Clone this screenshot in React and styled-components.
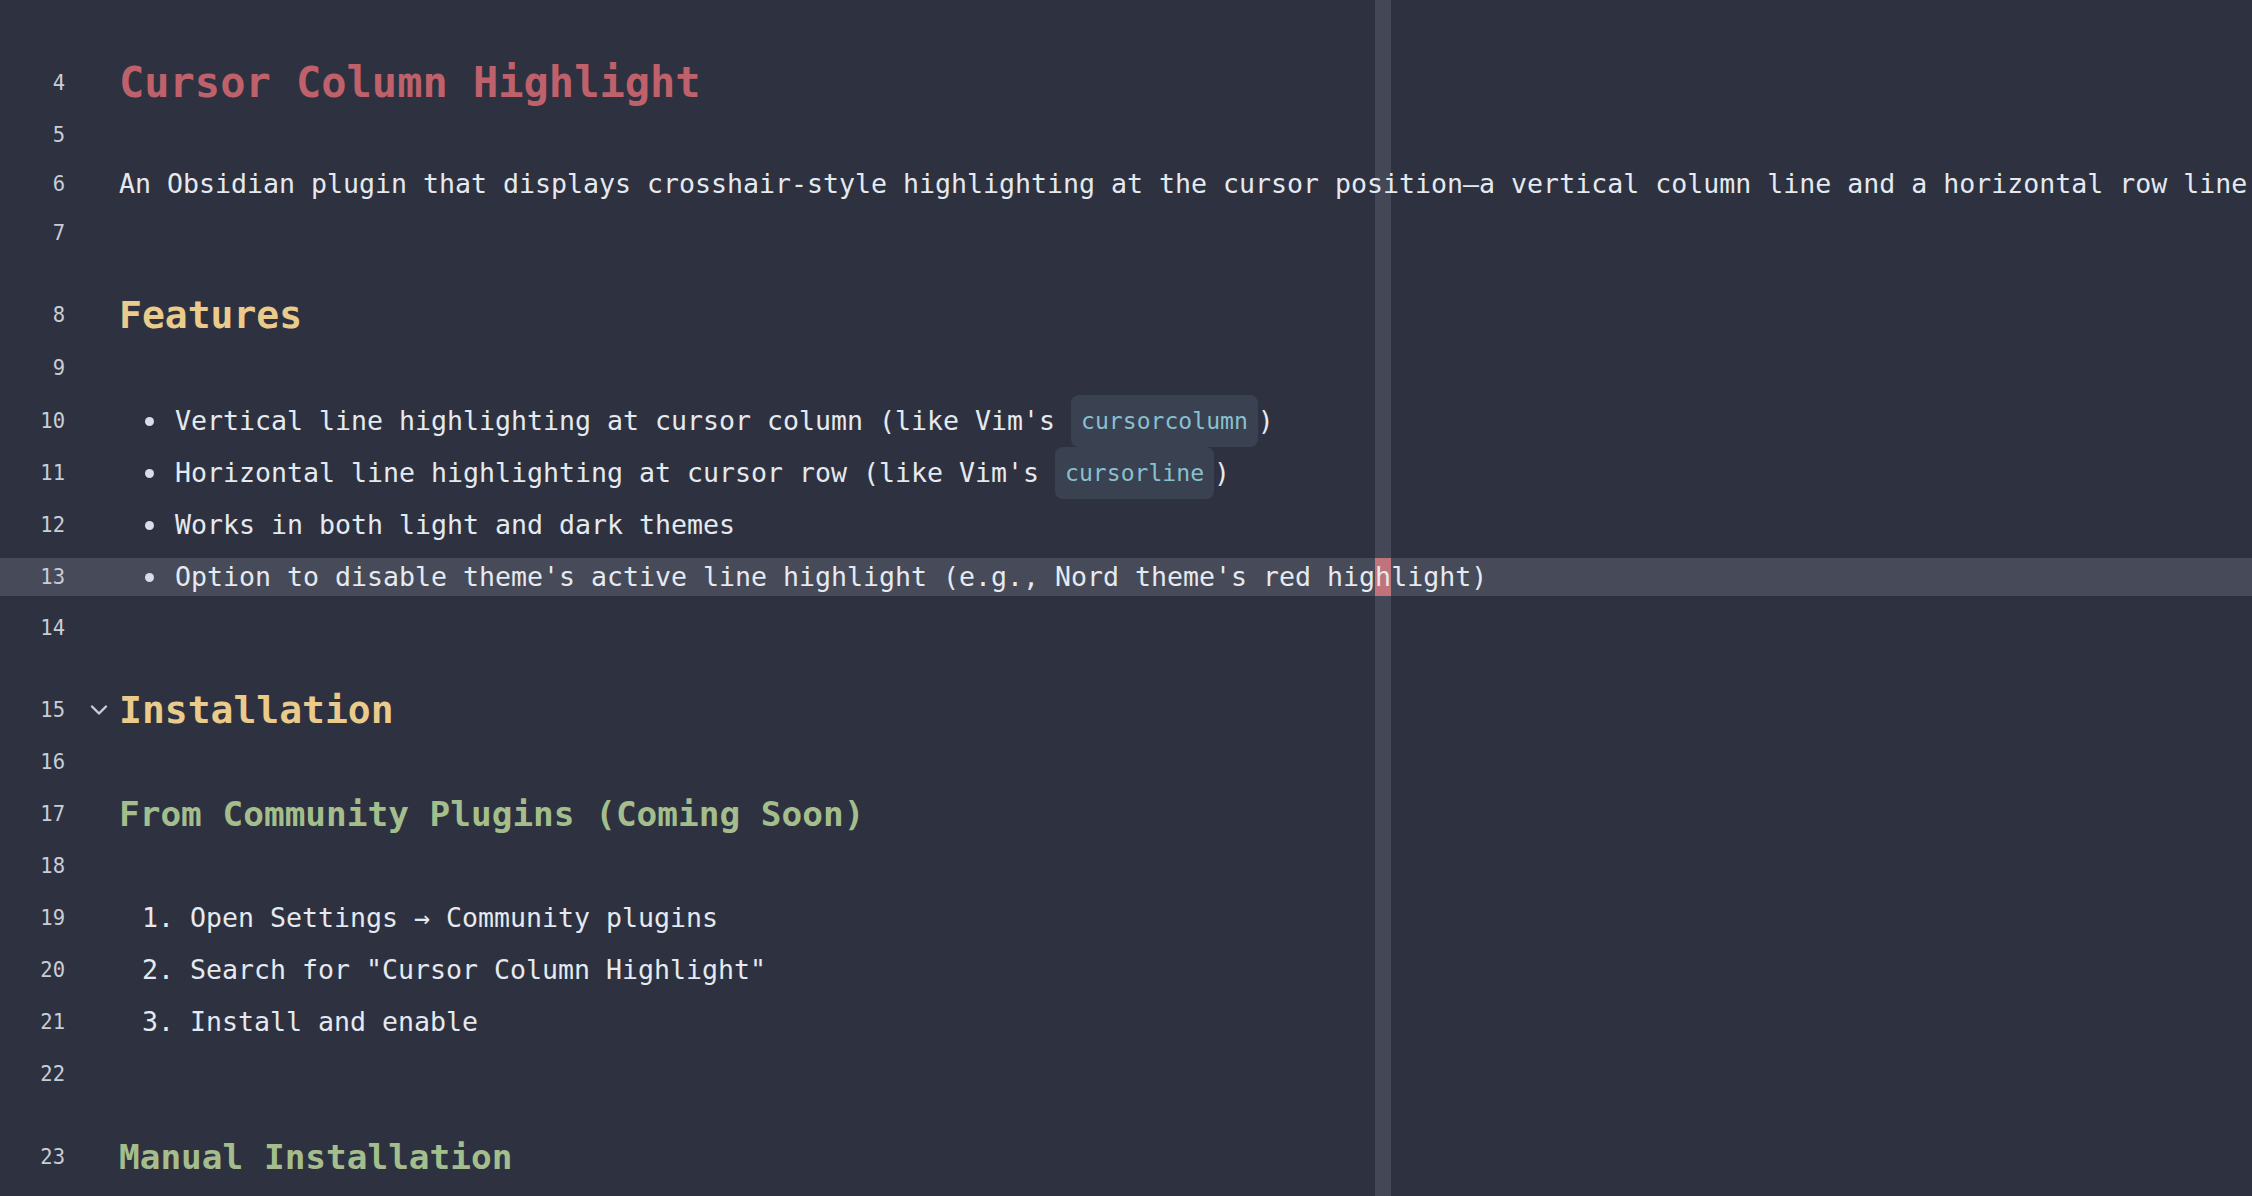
import React from 'react'
import styled, { createGlobalStyle } from 'styled-components'

const GlobalStyle = createGlobalStyle`
  html, body {
    margin: 0;
    padding: 0;
    background: #2e3240;
    overflow: hidden;
  }
`

const Editor = styled.div`
  position: relative;
  min-height: 100vh;
  padding-top: 56px;
  box-sizing: border-box;
  background: #2e3240;
  font-family: 'DejaVu Sans Mono', 'Liberation Mono', monospace;
  color: #e5e9f0;
  overflow: hidden;
`

// the crosshair column that follows the cursor
const ColumnStrip = styled.div`
  position: absolute;
  top: 0;
  bottom: 0;
  left: 1375px;
  width: 16px;
  background: #444756;
  z-index: 0;
`

const Row = styled.div`
  position: relative;
  z-index: 1;
  display: flex;
  align-items: center;
  height: ${(p) => p.$h || 52}px;
  padding-top: ${(p) => p.$pad || 0}px;
`

const Band = styled.div`
  flex: 1;
  display: flex;
  align-items: center;
  height: 38px;
  background: ${(p) => (p.$active ? '#474b59' : 'transparent')};
`

const LineNo = styled.div`
  width: 65px;
  flex-shrink: 0;
  text-align: right;
  font-size: 20.5px;
  line-height: 38px;
  color: #c8cdd6;
`

const Fold = styled.div`
  width: 54px;
  flex-shrink: 0;
  box-sizing: border-box;
  padding-right: 11px;
  display: flex;
  justify-content: flex-end;
  align-items: center;
  color: #c8cdd6;
`

const Text = styled.div`
  display: flex;
  align-items: center;
  white-space: pre;
  font-size: 26.58px;
  line-height: 38px;
  color: #e5e9f0;
`

const Heading = styled.div`
  white-space: pre;
  font-weight: bold;
  font-size: ${(p) => p.$size}px;
  line-height: 52px;
  color: ${(p) => p.$color};
`

const Bullet = styled.span`
  display: flex;
  align-items: center;
  width: 56px;
  flex-shrink: 0;
  padding-left: 26px;
  box-sizing: border-box;
  &::before {
    content: '';
    width: 9px;
    height: 9px;
    border-radius: 50%;
    background: #d8dee9;
  }
`

const Num = styled.span`
  padding-left: 23px;
`

const Code = styled.code`
  display: inline-block;
  font-family: inherit;
  font-size: 23.09px;
  line-height: 38px;
  padding: 7px 10px;
  background: #3a4151;
  color: #88c0d0;
  border-radius: 8px;
`

const Cursor = styled.span`
  display: inline-block;
  line-height: 38px;
  background: #c0737a;
`

const Chevron = () => (
  <svg width="18" height="12" viewBox="0 0 18 12" fill="none">
    <polyline
      points="2,2.5 9,9.5 16,2.5"
      stroke="currentColor"
      strokeWidth="2.4"
      strokeLinecap="round"
      strokeLinejoin="round"
    />
  </svg>
)

const Line = ({ n, h, pad, active, fold, children }) => (
  <Row $h={h} $pad={pad}>
    <Band $active={active}>
      <LineNo>{n}</LineNo>
      <Fold>{fold && <Chevron />}</Fold>
      {children}
    </Band>
  </Row>
)

const H1 = ({ children }) => (
  <Heading $size={42} $color="#bf616a">{children}</Heading>
)
const H2 = ({ children }) => (
  <Heading $size={38} $color="#ebcb8b">{children}</Heading>
)
const H3 = ({ children }) => (
  <Heading $size={34.4} $color="#a3be8c">{children}</Heading>
)

const Item = ({ children }) => (
  <Text>
    <Bullet />
    {children}
  </Text>
)

const Step = ({ i, children }) => (
  <Text>
    <Num>{i}. </Num>
    {children}
  </Text>
)

export default function App() {
  return (
    <>
      <GlobalStyle />
      <Editor>
        <ColumnStrip />
        <Line n={4} h={54}>
          <H1>Cursor Column Highlight</H1>
        </Line>
        <Line n={5} h={50} />
        <Line n={6} h={48}>
          <Text>
            An Obsidian plugin that displays crosshair-style highlighting at the cursor position—a vertical column line and a horizontal row line
          </Text>
        </Line>
        <Line n={7} h={50} />
        <Line n={8} pad={31}>
          <H2>Features</H2>
        </Line>
        <Line n={9} h={54} />
        <Line n={10}>
          <Item>
            Vertical line highlighting at cursor column (like Vim's <Code>cursorcolumn</Code>)
          </Item>
        </Line>
        <Line n={11}>
          <Item>
            Horizontal line highlighting at cursor row (like Vim's <Code>cursorline</Code>)
          </Item>
        </Line>
        <Line n={12}>
          <Item>Works in both light and dark themes</Item>
        </Line>
        <Line n={13} active>
          <Item>
            Option to disable theme's active line highlight (e.g., Nord theme's red hig
            <Cursor>h</Cursor>
            light)
          </Item>
        </Line>
        <Line n={14} h={50} />
        <Line n={15} pad={31} fold>
          <H2>Installation</H2>
        </Line>
        <Line n={16} />
        <Line n={17}>
          <H3>From Community Plugins (Coming Soon)</H3>
        </Line>
        <Line n={18} />
        <Line n={19}>
          <Step i={1}>Open Settings → Community plugins</Step>
        </Line>
        <Line n={20}>
          <Step i={2}>Search for "Cursor Column Highlight"</Step>
        </Line>
        <Line n={21}>
          <Step i={3}>Install and enable</Step>
        </Line>
        <Line n={22} />
        <Line n={23} pad={31}>
          <H3>Manual Installation</H3>
        </Line>
      </Editor>
    </>
  )
}
